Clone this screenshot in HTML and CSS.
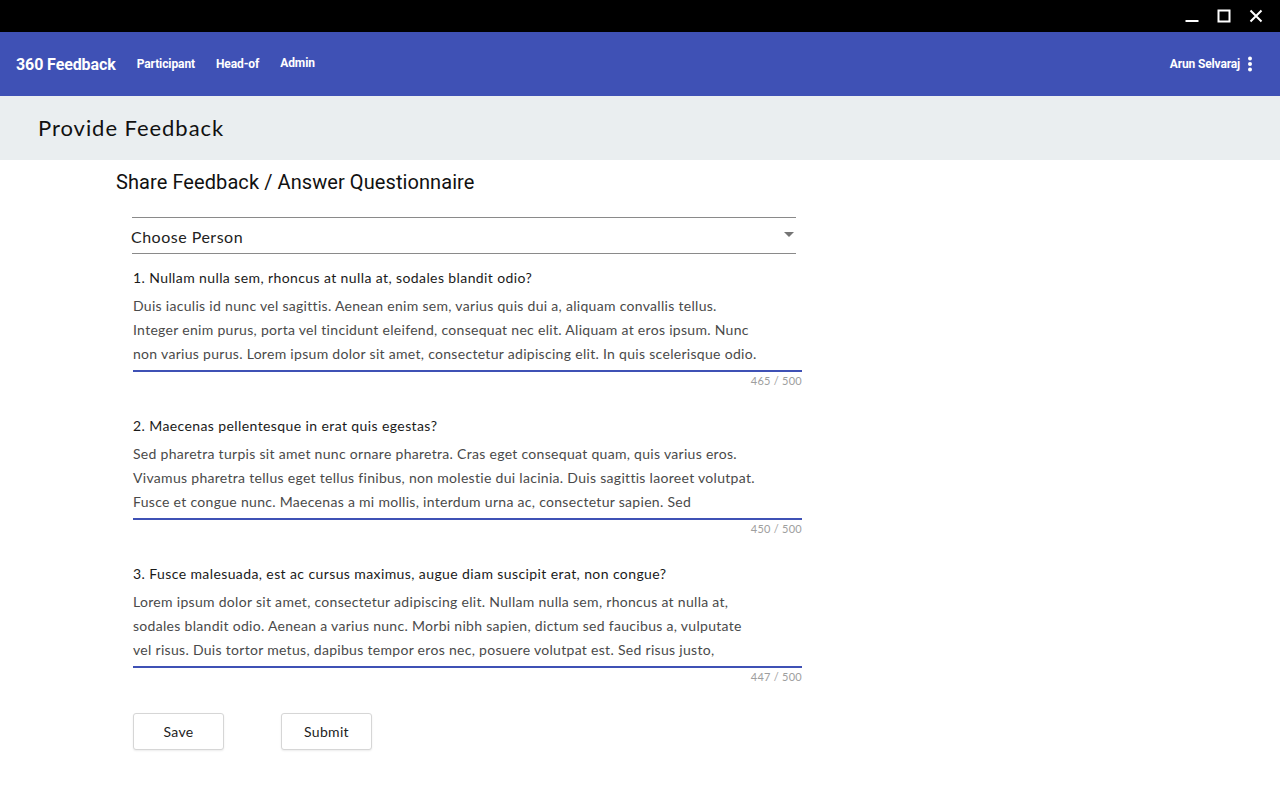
FILE: index.html
```html
<!DOCTYPE html>
<html lang="en">
<head>
<meta charset="utf-8">
<title>360 Feedback</title>
<link rel="stylesheet" href="styles.css">
</head>
<body>
<div class="titlebar">
  <span class="win-btn"><svg width="16" height="16" viewBox="0 0 16 16"><rect x="1.5" y="12" width="13" height="2" fill="#fff"/></svg></span>
  <span class="win-btn"><svg width="16" height="16" viewBox="0 0 16 16"><rect x="2.5" y="2.5" width="11" height="11" fill="none" stroke="#fff" stroke-width="2"/></svg></span>
  <span class="win-btn"><svg width="16" height="16" viewBox="0 0 16 16"><path d="M2.5 2.5 L13.5 13.5 M13.5 2.5 L2.5 13.5" stroke="#fff" stroke-width="2"/></svg></span>
</div>
<header class="appbar">
  <span class="brand">360 Feedback</span>
  <nav class="nav">
    <a class="nav-link">Participant</a>
    <a class="nav-link">Head-of</a>
    <a class="nav-link nav-up">Admin</a>
  </nav>
  <div class="user">
    <span class="user-name">Arun Selvaraj</span>
    <svg class="dots" width="6" height="16" viewBox="0 0 6 16"><circle cx="3" cy="2.5" r="2" fill="#fff"/><circle cx="3" cy="8" r="2" fill="#fff"/><circle cx="3" cy="13.5" r="2" fill="#fff"/></svg>
  </div>
</header>
<div class="subheader"><h1 class="page-title">Provide Feedback</h1></div>
<main class="content">
  <h2 class="section-title">Share Feedback / Answer Questionnaire</h2>
  <div class="form">
    <div class="select">
      <span class="select-value">Choose Person</span>
      <span class="select-arrow"></span>
    </div>

    <div class="question">
      <div class="q-label">1. Nullam nulla sem, rhoncus at nulla at, sodales blandit odio?</div>
      <div class="answer">Duis iaculis id nunc vel sagittis. Aenean enim sem, varius quis dui a, aliquam convallis tellus.<br>Integer enim purus, porta vel tincidunt eleifend, consequat nec elit. Aliquam at eros ipsum. Nunc<br>non varius purus. Lorem ipsum dolor sit amet, consectetur adipiscing elit. In quis scelerisque odio.</div>
      <div class="counter">465 / 500</div>
    </div>

    <div class="question">
      <div class="q-label">2. Maecenas pellentesque in erat quis egestas?</div>
      <div class="answer">Sed pharetra turpis sit amet nunc ornare pharetra. Cras eget consequat quam, quis varius eros.<br>Vivamus pharetra tellus eget tellus finibus, non molestie dui lacinia. Duis sagittis laoreet volutpat.<br>Fusce et congue nunc. Maecenas a mi mollis, interdum urna ac, consectetur sapien. Sed</div>
      <div class="counter">450 / 500</div>
    </div>

    <div class="question">
      <div class="q-label">3. Fusce malesuada, est ac cursus maximus, augue diam suscipit erat, non congue?</div>
      <div class="answer">Lorem ipsum dolor sit amet, consectetur adipiscing elit. Nullam nulla sem, rhoncus at nulla at,<br>sodales blandit odio. Aenean a varius nunc. Morbi nibh sapien, dictum sed faucibus a, vulputate<br>vel risus. Duis tortor metus, dapibus tempor eros nec, posuere volutpat est. Sed risus justo,</div>
      <div class="counter">447 / 500</div>
    </div>

    <div class="actions">
      <button class="btn">Save</button>
      <button class="btn">Submit</button>
    </div>
  </div>
</main>
</body>
</html>
```
FILE: styles.css
```css
* { box-sizing: border-box; }
body {
  margin: 0;
  background: #fff;
  font-family: Lato, "Open Sans", sans-serif;
  color: #222;
}
.titlebar {
  height: 32px;
  background: #000;
  display: flex;
  justify-content: flex-end;
  align-items: center;
  padding-right: 8px;
}
.win-btn {
  width: 32px;
  height: 16px;
  display: flex;
  justify-content: center;
}
.appbar {
  height: 64px;
  background: #3f51b5;
  color: #fff;
  display: flex;
  align-items: center;
  padding: 0 27px 0 16px;
  font-family: Roboto, sans-serif;
}
.brand { font-size: 16px; font-weight: 700; margin-right: 21px; letter-spacing: -0.1px; }
.nav { display: flex; gap: 21px; }
.nav-link { font-size: 12px; font-weight: 700; color: #fff; letter-spacing: -0.1px; }
.nav-up { position: relative; top: -1px; }
.user { margin-left: auto; display: flex; align-items: center; gap: 7px; }
.user-name { font-size: 12px; font-weight: 700; letter-spacing: -0.15px; }
.subheader {
  height: 64px;
  background: #eaeef0;
  display: flex;
  align-items: center;
  padding-left: 38px;
  padding-bottom: 1px;
}
.page-title {
  margin: 0;
  font-size: 22px;
  font-weight: 400;
  color: #111;
  letter-spacing: 0.95px;
}
.content { padding: 10px 0 40px 116px; }
.section-title {
  margin: 0;
  font-family: Roboto, sans-serif;
  font-size: 20px;
  line-height: 24px;
  font-weight: 400;
  color: #111;
  letter-spacing: 0.08px;
}
.form { padding-left: 16px; padding-top: 23px; width: 701px; }
.select {
  width: 664px;
  height: 37px;
  border-top: 1px solid #8a8a8a;
  border-bottom: 1px solid #8a8a8a;
  display: flex;
  align-items: center;
  padding-top: 1px;
}
.select-value { font-size: 16px; color: #222; margin-left: -1px; letter-spacing: 0.5px; }
.select-arrow {
  margin-left: auto;
  margin-right: 2px;
  width: 0; height: 0;
  border-left: 5px solid transparent;
  border-right: 5px solid transparent;
  border-top: 5px solid #757575;
  margin-top: -4px;
}
.question { width: 669px; margin-left: 1px; margin-top: 14px; }
.question + .question { margin-top: 28px; }
.q-label { font-size: 14px; line-height: 20px; font-weight: 400; color: #1a1a1a; letter-spacing: 0.4px; }
.answer {
  margin-top: 6px;
  font-size: 14px;
  line-height: 24px;
  font-weight: 400;
  color: #4a4a4a;
  padding-bottom: 4px;
  border-bottom: 2px solid #3f51b5;
  white-space: nowrap;
  letter-spacing: 0.3px;
}
.counter {
  margin-top: 2px;
  text-align: right;
  font-size: 11px;
  line-height: 14px;
  color: #9e9e9e;
  letter-spacing: 0.25px;
}
.actions { display: flex; gap: 57px; margin-top: 29px; margin-left: 1px; }
.btn {
  width: 91px;
  height: 37px;
  background: #fff;
  border: 1px solid #d6d6d6;
  border-radius: 3px;
  box-shadow: 0 1px 2px rgba(0,0,0,0.08);
  font-family: Lato, sans-serif;
  font-size: 14px;
  color: #222;
  letter-spacing: 0.3px;
}
```
